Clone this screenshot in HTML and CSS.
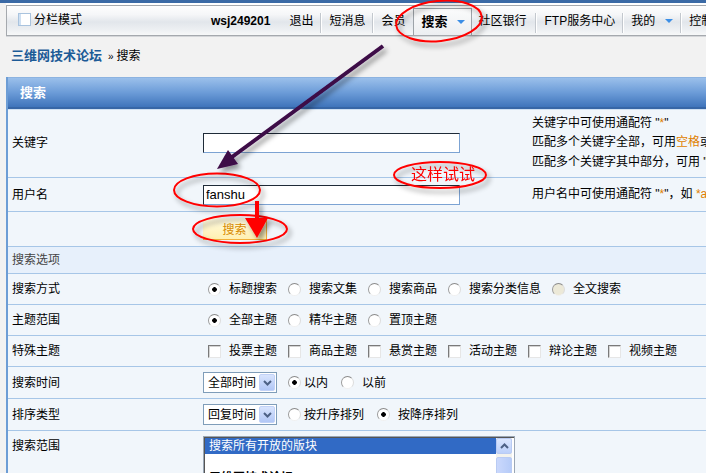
FILE: index.html
```html
<!DOCTYPE html>
<html lang="zh-CN">
<head>
    <meta charset="UTF-8">
    <title>搜索 - 三维网技术论坛</title>
    <link rel="stylesheet" href="styles.css">
</head>
<body>
    <div class="topline"></div>
    <div class="nav">
        <div class="split"><span class="cb-blue"></span>分栏模式</div>
        <ul class="menu">
            <li class="user">wsj249201</li>
            <li>退出</li>
            <li class="sep">短消息</li>
            <li class="sep">会员</li>
            <li class="tab">搜索<i class="tri"></i></li>
            <li class="bank">社区银行</li>
            <li class="sep">FTP服务中心</li>
            <li class="sep">我的<i class="tri"></i></li>
            <li class="sep">控制面板</li>
        </ul>
    </div>
    <div class="crumb"><a href="#">三维网技术论坛</a><span class="raquo">»</span>搜索</div>

    <div class="box">
        <div class="box-head">搜索</div>

        <div class="row r-key">
            <div class="lbl">关键字</div>
            <div class="fld"><input class="txt" type="text"></div>
            <div class="tip">
                关键字中可使用通配符 "<span class="hl">*</span>"<br>
                匹配多个关键字全部，可用<span class="hl">空格</span>或 "<span class="hl">AND</span>" 连接。如 win32 AND Bugs<br>
                匹配多个关键字其中部分，可用 "<span class="hl">|</span>" 或 "<span class="hl">OR</span>" 连接。如 win32 OR Bugs
            </div>
        </div>

        <div class="row r-user">
            <div class="lbl">用户名</div>
            <div class="fld"><input class="txt" type="text" value="fanshu"></div>
            <div class="tip">用户名中可使用通配符 "<span class="hl">*</span>"，如 <span class="hl">*abc*</span></div>
        </div>

        <div class="row r-btn">
            <div class="lbl"></div>
            <div class="fld"><button class="btn" type="button">搜索</button></div>
        </div>

        <div class="row r-sec">
            <div class="lbl">搜索选项</div>
        </div>

        <div class="row r-opt">
            <div class="lbl">搜索方式</div>
            <div class="choices">
                <label class="ch"><input class="rd" type="radio" name="mode" checked>标题搜索</label>
                <label class="ch"><input class="rd" type="radio" name="mode">搜索文集</label>
                <label class="ch"><input class="rd" type="radio" name="mode">搜索商品</label>
                <label class="ch"><input class="rd" type="radio" name="mode">搜索分类信息</label>
                <label class="ch"><input class="rd dis" type="radio" name="mode">全文搜索</label>
            </div>
        </div>

        <div class="row r-opt">
            <div class="lbl">主题范围</div>
            <div class="choices">
                <label class="ch"><input class="rd" type="radio" name="range" checked>全部主题</label>
                <label class="ch"><input class="rd" type="radio" name="range">精华主题</label>
                <label class="ch"><input class="rd" type="radio" name="range">置顶主题</label>
            </div>
        </div>

        <div class="row r-opt">
            <div class="lbl">特殊主题</div>
            <div class="choices">
                <label class="ch"><input class="ck" type="checkbox">投票主题</label>
                <label class="ch"><input class="ck" type="checkbox">商品主题</label>
                <label class="ch"><input class="ck" type="checkbox">悬赏主题</label>
                <label class="ch"><input class="ck" type="checkbox">活动主题</label>
                <label class="ch"><input class="ck" type="checkbox">辩论主题</label>
                <label class="ch"><input class="ck" type="checkbox">视频主题</label>
            </div>
        </div>

        <div class="row r-tall">
            <div class="lbl">搜索时间</div>
            <div class="choices tm">
                <div class="sel">全部时间<b><svg width="9" height="6" viewBox="0 0 9 6"><path d="M1 1l3.5 3.5L8 1" fill="none" stroke="#4d6185" stroke-width="2"/></svg></b></div>
                <label class="ch first"><input class="rd" type="radio" name="before" checked>以内</label>
                <label class="ch"><input class="rd" type="radio" name="before">以前</label>
            </div>
        </div>

        <div class="row r-tall">
            <div class="lbl">排序类型</div>
            <div class="choices tm">
                <div class="sel">回复时间<b><svg width="9" height="6" viewBox="0 0 9 6"><path d="M1 1l3.5 3.5L8 1" fill="none" stroke="#4d6185" stroke-width="2"/></svg></b></div>
                <label class="ch first"><input class="rd" type="radio" name="order">按升序排列</label>
                <label class="ch"><input class="rd" type="radio" name="order" checked>按降序排列</label>
            </div>
        </div>

        <div class="row r-forum">
            <div class="lbl">搜索范围</div>
            <div class="fld">
                <div class="list">
                    <div class="list-items">
                        <div class="on">搜索所有开放的版块</div>
                        <div class="grp">三维网技术论坛</div>
                    </div>
                    <div class="scroll">
                        <div class="up"><svg width="9" height="6" viewBox="0 0 9 6"><path d="M1 5l3.5-3.5L8 5" fill="none" stroke="#4d6185" stroke-width="2"/></svg></div>
                        <div class="thumb"></div>
                    </div>
                </div>
            </div>
        </div>
    </div>

    <!-- hand drawn notes on top of the screenshot -->
    <svg class="marks" width="706" height="473" viewBox="0 0 706 473">
        <defs>
            <filter id="sh" x="-20%" y="-30%" width="150%" height="180%">
                <feDropShadow dx="3" dy="4" stdDeviation="2.5" flood-color="#000" flood-opacity="0.4"/>
            </filter>
        </defs>
        <g fill="none" stroke="#f00" stroke-width="2" filter="url(#sh)">
            <ellipse cx="439" cy="21" rx="43" ry="20" transform="rotate(-6 439 21)"/>
            <ellipse cx="217" cy="190" rx="43" ry="16.5"/>
            <ellipse cx="240" cy="229" rx="47" ry="14"/>
            <ellipse cx="440" cy="175" rx="46" ry="13"/>
        </g>
        <g filter="url(#sh)">
            <line x1="383" y1="46" x2="232" y2="157" stroke="#3c0846" stroke-width="4"/>
            <polygon points="217,169 228,150 238,164" fill="#3c0846"/>
        </g>
        <g filter="url(#sh)" fill="#f00">
            <rect x="255" y="201" width="4" height="19"/>
            <polygon points="245,218 268,218 257,238"/>
        </g>
        <text class="note" x="411" y="180">这样试试</text>
    </svg>
</body>
</html>
```

FILE: styles.css
```css
body {
    margin: 0;
    width: 706px;
    height: 473px;
    overflow: hidden;
    position: relative;
    background: #f2f2f2;
    font: 12px/16px "Liberation Sans", "Noto Sans CJK SC", sans-serif;
    color: #000;
}

.topline {
    height: 3px;
    background: #3b6aa6;
}

/* top menu bar */
.nav {
    display: flex;
    width: 760px;
    height: 29px;
    margin: 2px 0 0 6px;
    border: 1px solid #a5a9ae;
    border-right: 0;
    background: linear-gradient(#fefefe 0, #f5f6f8 30%, #e2e6eb 55%, #eceff2 80%, #f7f8f9 100%);
    box-shadow: 0 -2px #fff, 0 1px #d4d6d9;
}

.split {
    width: 193px;
    height: 13px;
    padding: 7px 0 0 11px;
    display: flex;
    align-items: center;
    gap: 3px;
}

.cb-blue {
    width: 13px;
    height: 13px;
    box-sizing: border-box;
    border: 1px solid #a9c3de;
    background: linear-gradient(90deg, #cfe0f2 0 2px, #fff 2px);
}

.menu {
    display: flex;
    align-items: flex-end;
    list-style: none;
    margin: 0;
    padding: 0;
}

.menu li {
    display: flex;
    align-items: flex-start;
    height: 20px;
    margin-bottom: 2px;
    padding: 0 7px 0 8px;
    box-sizing: border-box;
    white-space: nowrap;
}

.menu .user {
    padding: 0;
    margin-right: 11px;
    font-weight: bold;
}

.menu .sep {
    border-left: 1px solid #c3c8ce;
    box-shadow: inset 1px 0 #fff;
}

.menu .tab {
    height: 27px;
    margin: 0 0 0 1px;
    padding: 0 6px 0 7px;
    align-items: center;
    border: 1px solid #9da3a9;
    border-bottom: 0;
    background: linear-gradient(#fbfbfc, #eceef1);
    font-size: 13px;
    font-weight: bold;
}

.menu .bank {
    padding: 0 9px 0 6px;
}

.tri {
    display: inline-block;
    width: 0;
    height: 0;
    margin: 6px 0 0 10px;
    border-left: 4px solid transparent;
    border-right: 4px solid transparent;
    border-top: 4px solid #3b8ee6;
}

.tab .tri {
    margin-top: 0;
}

/* breadcrumb */
.crumb {
    height: 41px;
    box-sizing: border-box;
    padding: 12px 0 0 11px;
}

.crumb a {
    color: #1d5b97;
    font-size: 13px;
    font-weight: bold;
    text-decoration: none;
}

.raquo {
    font-size: 10px;
    margin: 0 3px 0 6px;
}

/* search form box */
.box {
    width: 900px;
    margin-left: 6px;
    border-left: 2px solid #6d9dd5;
    background: #f1f6fb;
}

.box-head {
    height: 29px;
    padding-left: 12px;
    border-top: 1px solid #8db3e0;
    border-bottom: 2px solid #3766a6;
    background: linear-gradient(#9bc0eb, #6c9cd8 50%, #3f74bb);
    color: #fff;
    font-size: 13px;
    font-weight: bold;
    line-height: 29px;
}

.row {
    display: grid;
    grid-template-columns: 191px 329px 380px;
    align-items: center;
    box-sizing: border-box;
    border-bottom: 1px solid #a7c6e7;
}

.row > div {
    padding-left: 4px;
}

.r-key { height: 69px; box-shadow: inset 0 1px #cfe0f2; }
.r-user { height: 34px; }
.r-btn { height: 35px; }
.r-sec { height: 27px; background: #e7f0fb; color: #444; }
.r-opt { height: 31px; }
.r-tall { height: 32px; }
.r-forum { height: 60px; align-items: start; border-bottom: 0; }

.r-forum .lbl {
    padding-top: 7px;
}

.tip {
    line-height: 19.5px;
    white-space: nowrap;
}

.hl {
    color: #e07f00;
}

.txt {
    width: 257px;
    height: 20px;
    box-sizing: border-box;
    margin: 0;
    padding: 0 2px;
    border: 1px solid;
    border-color: #1f2b38 #7ca3d3 #7ca3d3 #1f2b38;
    background: #fff;
    font: 13px "Liberation Sans", sans-serif;
    outline: none;
}

.btn {
    width: 64px;
    height: 22px;
    padding: 0;
    border: 0;
    border-right: 1px solid #f2b13a;
    border-bottom: 1px solid #f2b13a;
    background: linear-gradient(#fffbe2, #fff0b2);
    color: #d88a00;
    font: 12px "Noto Sans CJK SC", sans-serif;
}

/* radios and checkboxes */
.choices {
    grid-column: 2 / 4;
    display: flex;
    align-items: center;
    white-space: nowrap;
}

.ch {
    display: flex;
    align-items: center;
    margin-right: 6px;
}

.ch input {
    appearance: none;
    width: 13px;
    height: 13px;
    box-sizing: border-box;
    margin: 0 8px 0 5px;
}

.rd {
    border-radius: 50%;
    border: 1px solid;
    border-color: #8a8a8a #dcdcdc #f0f0f0 #9a9a9a;
    background: #fff;
}

.rd:checked {
    background: radial-gradient(circle, #000 0 2px, #fff 2.6px);
}

.rd.dis {
    background: #ece9d8;
}

.ck {
    border: 1px solid;
    border-color: #7a7a7a #e6e6e6 #e6e6e6 #7a7a7a;
    background: #fff;
    box-shadow: inset 1px 1px #d4d4d4;
}

.tm .ch {
    margin-right: 8px;
}

.tm .first input {
    margin-right: 3px;
}

.sel {
    display: flex;
    align-items: center;
    width: 74px;
    height: 21px;
    box-sizing: border-box;
    margin-right: 6px;
    padding-left: 4px;
    border: 1px solid #7f9db9;
    background: #fff;
}

.sel b {
    display: flex;
    align-items: center;
    justify-content: center;
    width: 16px;
    height: 17px;
    margin: 0 1px 0 auto;
    box-sizing: border-box;
    border: 1px solid #c2d2f7;
    border-radius: 2px;
    background: linear-gradient(#d8e4fd, #b2c7f6);
}

/* forum list box */
.list {
    display: flex;
    width: 312px;
    height: 56px;
    margin-top: 5px;
    box-sizing: border-box;
    border: 1px solid #9aa6b4;
    background: #fff;
    box-shadow: inset 1px 1px #555;
    overflow: hidden;
}

.list-items {
    flex: 1;
    padding: 1px 0 0 1px;
}

.list .on {
    height: 16px;
    padding-left: 4px;
    background: #316ac5;
    color: #fff;
}

.list .grp {
    margin-top: 16px;
    padding-left: 4px;
    font-weight: bold;
}

.scroll {
    width: 16px;
    margin: 1px 2px 0 0;
    background: #f3f2ed;
}

.scroll .up {
    display: flex;
    align-items: center;
    justify-content: center;
    height: 16px;
    box-sizing: border-box;
    border: 1px solid #b9cbf3;
    border-radius: 2px;
    background: linear-gradient(#dbe6fe, #bcd0fa);
}

.scroll .thumb {
    height: 40px;
    margin-top: 3px;
    border: 1px solid #b9cbf3;
    border-radius: 2px;
    background: linear-gradient(90deg, #cad8fc, #b6cbf8);
}

/* annotations */
.marks {
    position: absolute;
    left: 0;
    top: 0;
    pointer-events: none;
}

.note {
    font: 16px "Noto Sans CJK SC", sans-serif;
    fill: #f00;
}
```
